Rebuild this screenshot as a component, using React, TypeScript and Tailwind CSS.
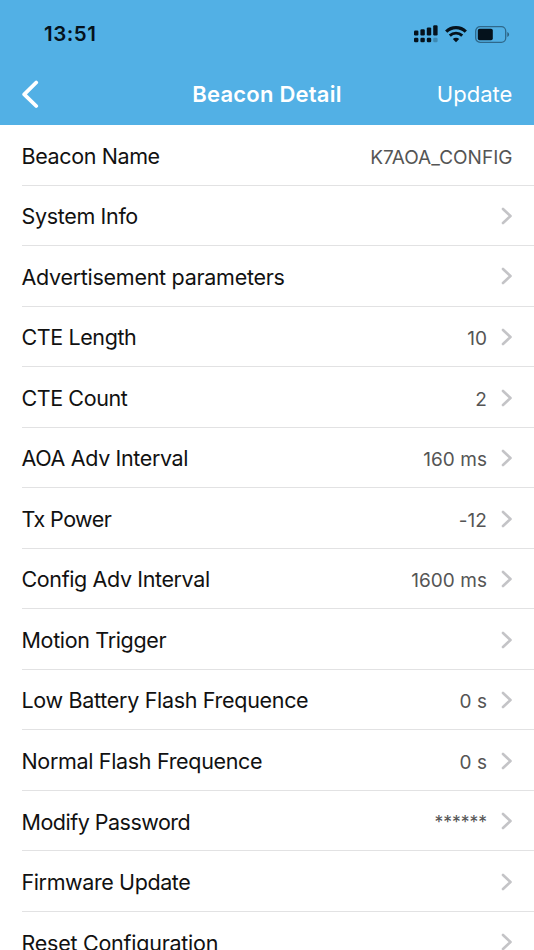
import { clsx } from "clsx";

interface Row {
  label: string;
  value?: string;
  hasArrow?: boolean;
  labelClass: string;
  valueClass?: string;
}

const rows: Row[] = [
  { label: "Beacon Name", value: "K7AOA_CONFIG", hasArrow: false, labelClass: "tracking-[-0.38px]", valueClass: "text-[19px] tracking-[0.02px]" },
  { label: "System Info", labelClass: "tracking-[-0.34px]" },
  { label: "Advertisement parameters", labelClass: "tracking-[-0.28px]" },
  { label: "CTE Length", value: "10", labelClass: "tracking-[-0.4px]" },
  { label: "CTE Count", value: "2", labelClass: "tracking-[-0.42px]" },
  { label: "AOA Adv Interval", value: "160 ms", labelClass: "tracking-[-0.36px]" },
  { label: "Tx Power", value: "-12", labelClass: "tracking-[-0.57px]" },
  { label: "Config Adv Interval", value: "1600 ms", labelClass: "tracking-[-0.38px]" },
  { label: "Motion Trigger", labelClass: "tracking-[-0.34px]" },
  { label: "Low Battery Flash Frequence", value: "0 s", labelClass: "tracking-[-0.31px]" },
  { label: "Normal Flash Frequence", value: "0 s", labelClass: "tracking-[-0.33px]" },
  { label: "Modify Password", value: "******", labelClass: "tracking-[-0.5px]", valueClass: "mb-[3px] text-[17.5px]" },
  { label: "Firmware Update", labelClass: "tracking-[-0.4px]" },
  { label: "Reset Configuration", labelClass: "tracking-[-0.25px]" },
];

function SignalIcon() {
  return (
    <svg width="24" height="18" viewBox="0 0 24 18" fill="#05121c">
      <rect x="0" y="5.5" width="4.4" height="5" rx="1.2" />
      <rect x="6.4" y="4.2" width="4.4" height="6.3" rx="1.2" />
      <rect x="12.8" y="2.4" width="4.4" height="8.1" rx="1.2" />
      <rect x="19.2" y="0.2" width="4.4" height="10.3" rx="1.2" />
      <rect x="0" y="12.8" width="4.4" height="4.4" rx="1.3" />
      <rect x="6.4" y="12.8" width="4.4" height="4.4" rx="1.3" />
      <rect x="12.8" y="12.8" width="4.4" height="4.4" rx="1.3" />
      <rect x="19.2" y="12.8" width="4.4" height="4.4" rx="1.3" opacity="0.25" />
    </svg>
  );
}

function WifiIcon() {
  return (
    <svg width="22" height="17" viewBox="0 0 22 17" fill="none" stroke="#05121c">
      <path d="M1.2 5.7a14 14 0 0 1 19.6 0" strokeWidth="3.2" />
      <path d="M4.8 9.6a9 9 0 0 1 12.4 0" strokeWidth="2.9" />
      <path d="M11 16.3l-3.2-3.2a4.600 4.600 0 0 1 6.400 0z" fill="#05121c" stroke="none" />
    </svg>
  );
}

function BatteryIcon() {
  return (
    <svg width="35" height="17" viewBox="0 0 35 17" fill="none">
      <rect x="0.7" y="0.7" width="30" height="15.6" rx="4.4" stroke="#05121c" strokeOpacity="0.45" strokeWidth="1.3" />
      <rect x="2.8" y="2.8" width="15" height="11.4" rx="1.8" fill="#05121c" />
      <path d="M32.3 6v5c1-.4 1.8-1.3 1.8-2.5s-.8-2.1-1.8-2.5z" fill="#05121c" fillOpacity="0.5" />
    </svg>
  );
}

function StatusBar() {
  return (
    <div className="flex h-16 items-center justify-between pt-1 pr-[24px] pl-[44px]">
      <span className="text-[20.5px] font-semibold tracking-[0.5px] text-[#05121c]">13:51</span>
      <div className="flex items-center">
        <SignalIcon />
        <div className="mr-[8px] ml-[7px]">
          <WifiIcon />
        </div>
        <BatteryIcon />
      </div>
    </div>
  );
}

function NavBar() {
  return (
    <div className="grid h-[61px] grid-cols-[1fr_auto_1fr] items-center px-[21.5px] text-white">
      <svg width="17" height="29" viewBox="0 0 17 29" fill="none" stroke="currentColor">
        <path d="M14.2 2.5L2.2 14.3L14.2 26" strokeWidth="3.8" strokeLinecap="round" strokeLinejoin="round" />
      </svg>
      <h1 className="text-[22px] font-semibold tracking-[0.22px]">Beacon Detail</h1>
      <span className="justify-self-end text-[22px] tracking-[0.05px]">Update</span>
    </div>
  );
}

function ListRow({ label, value, hasArrow = true, labelClass, valueClass = "text-[19px] tracking-[0.05px]" }: Row) {
  return (
    <li className="ml-[21.5px] flex h-[60.53px] shrink-0 items-center border-b border-[#e2e2e3] pt-[2.4px] pr-[21.5px]">
      <span className={clsx("flex-1 whitespace-nowrap text-[21.5px] text-[#111]", labelClass)}>{label}</span>
      {value && <span className={clsx("pt-[4px] text-[#555]", valueClass)}>{value}</span>}
      {hasArrow && (
        <svg className="mb-px ml-[13.5px]" width="12" height="18" viewBox="0 0 12 18" fill="none">
          <path d="M2 2L9.5 9L2 16" stroke="#c4c4c7" strokeWidth="2.6" strokeLinecap="round" strokeLinejoin="round" />
        </svg>
      )}
    </li>
  );
}

export default function App() {
  return (
    <div className="flex h-screen flex-col overflow-hidden bg-white font-['Inter',sans-serif]">
      <header className="h-[125px] shrink-0 bg-[#52b0e5]">
        <StatusBar />
        <NavBar />
      </header>
      <ul className="min-h-0 flex-1 overflow-hidden">
        {rows.map((row) => (
          <ListRow key={row.label} {...row} />
        ))}
      </ul>
    </div>
  );
}
